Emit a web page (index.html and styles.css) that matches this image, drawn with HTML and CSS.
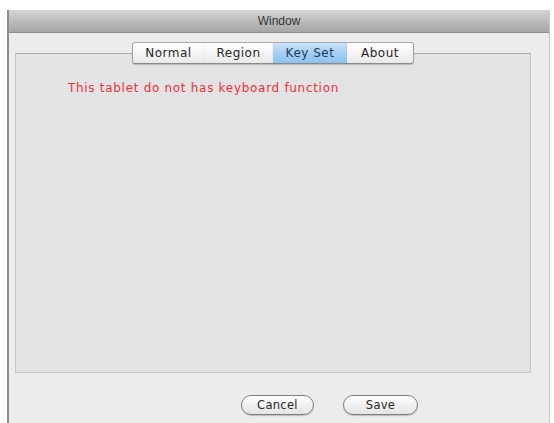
FILE: index.html
```html
<!DOCTYPE html>
<html>
<head>
<meta charset="utf-8">
<link rel="stylesheet" href="styles.css">
</head>
<body>
<div class="window">
  <div class="titlebar">Window</div>
  <div class="content">
    <div class="tabview">
      <div class="tabs">
        <div class="tab tab-normal">Normal</div>
        <div class="tab tab-region">Region</div>
        <div class="tab tab-keyset selected">Key Set</div>
        <div class="tab tab-about">About</div>
      </div>
      <div class="box">
        <p class="message">This tablet do not has keyboard function</p>
      </div>
    </div>
    <div class="footer">
      <button class="btn btn-cancel">Cancel</button>
      <button class="btn btn-save">Save</button>
    </div>
  </div>
</div>
</body>
</html>
```
FILE: styles.css
```css
html, body {
  margin: 0;
  padding: 0;
  background: #ffffff;
  height: 100%;
}
body {
  font-family: "DejaVu Sans", "Liberation Sans", sans-serif;
  overflow: hidden;
}
.window {
  margin: 10px 0 0 7px;
  width: 543px;
  height: 413px;
  display: flex;
  flex-direction: column;
  border-left: 2px solid #8c8c8c;
  border-right: 1px solid #c8c8c8;
  box-sizing: border-box;
}
.titlebar {
  height: 23px;
  flex: none;
  background: linear-gradient(#d6d6d6, #b7b7b7 60%, #a6a6a6);
  border-bottom: 1px solid #8f8f8f;
  box-sizing: border-box;
  text-align: center;
  font-family: "Liberation Sans", sans-serif;
  font-size: 12px;
  line-height: 23px;
  color: #333333;
}
.content {
  flex: 1;
  background: #ececec;
  display: flex;
  flex-direction: column;
  padding: 9px 18px 0 6px;
}
.tabview {
  display: flex;
  flex-direction: column;
}
.tabs {
  display: flex;
  justify-content: center;
  position: relative;
  z-index: 1;
  margin-bottom: -11px;
}
.tab {
  height: 22px;
  box-sizing: border-box;
  display: flex;
  align-items: center;
  justify-content: center;
  font-size: 12px;
  letter-spacing: 0.5px;
  color: #262626;
  background: linear-gradient(#ffffff, #f4f4f4 50%, #e9e9e9);
  border-top: 1px solid #a8a8a8;
  border-bottom: 1px solid #8a8a8a;
  box-shadow: 0 1px 1px rgba(0,0,0,0.18);
}
.tab-normal {
  width: 72px;
  border-left: 1px solid #a0a0a0;
  border-radius: 3px 0 0 3px;
}
.tab-region { width: 69px; }
.tab-keyset { width: 74px; }
.tab-about {
  width: 67px;
  border-right: 1px solid #a0a0a0;
  border-radius: 0 3px 3px 0;
}
.tab.selected {
  background: linear-gradient(#c9e3fa, #a4cff4 50%, #8cc2f0);
  color: #233a55;
}
.box {
  height: 320px;
  box-sizing: border-box;
  background: #e3e3e3;
  border: 1px solid #c6c6c6;
  border-top-color: #a9a9a9;
  padding: 27px 0 0 52px;
}
.message {
  margin: 0;
  font-size: 12px;
  letter-spacing: 0.7px;
  line-height: 15px;
  color: #ee2f3c;
}
.footer {
  display: flex;
  gap: 29px;
  padding: 22px 0 0 226px;
}
.btn {
  height: 20px;
  box-sizing: border-box;
  border: 1px solid #7f7f7f;
  border-radius: 10px;
  background: linear-gradient(#ffffff, #f1f1f1 50%, #e4e4e4);
  box-shadow: 0 1px 1px rgba(0,0,0,0.2);
  font-family: "DejaVu Sans", sans-serif;
  font-size: 11.5px;
  letter-spacing: 0.3px;
  color: #262626;
  padding: 0;
}
.btn-cancel { width: 73px; }
.btn-save { width: 75px; }
```
